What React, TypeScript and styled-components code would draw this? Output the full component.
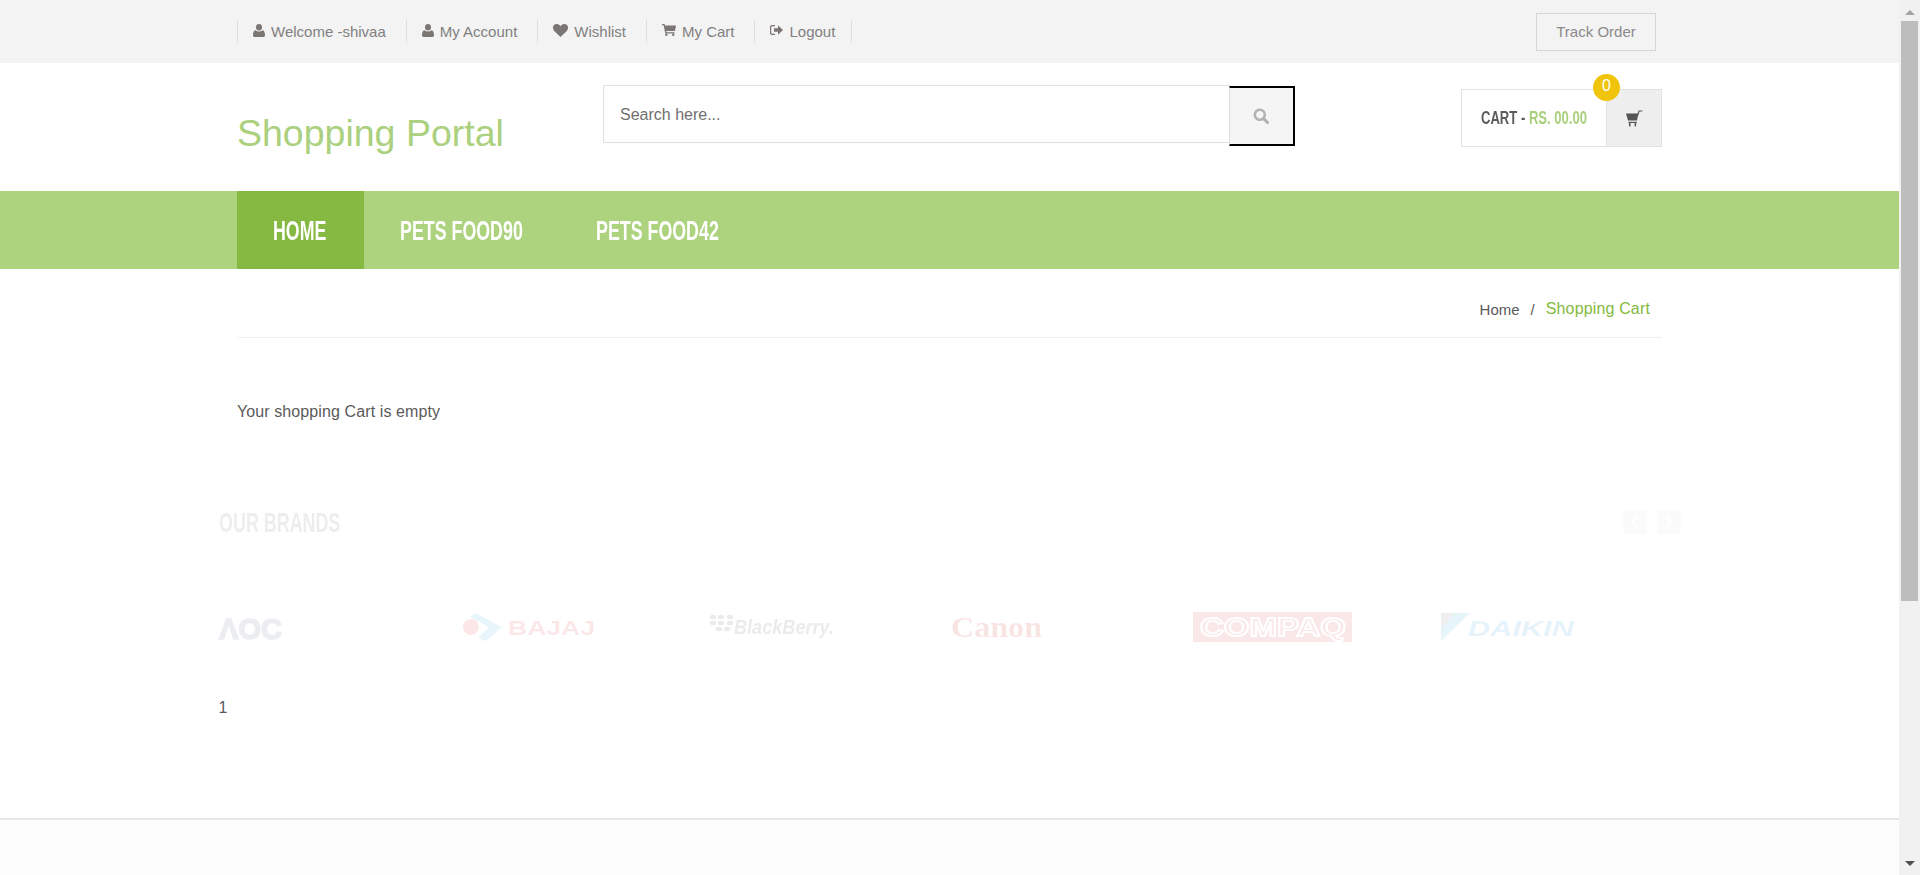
import React from 'react';
import styled, { createGlobalStyle } from 'styled-components';

const GlobalStyle = createGlobalStyle`
    html, body {
        margin: 0;
        padding: 0;
        overflow: hidden;
        background: #fff;
        font-family: "Liberation Sans", Arial, sans-serif;
    }
    * {
        box-sizing: border-box;
    }
`;

const Shell = styled.div`
    display: flex;
    width: 1920px;
    height: 875px;
    overflow: hidden;
`;

const Page = styled.div`
    display: flex;
    flex-direction: column;
    flex: 1;
    min-width: 0;
`;

const Container = styled.div`
    width: 1425px;
    margin: 0 auto;
`;

const TopBar = styled.div`
    height: 63px;
    background: #f3f3f3;
`;

const TopBarInner = styled(Container)`
    display: flex;
    justify-content: space-between;
    align-items: flex-start;
    padding-right: 6px;
`;

const TopLinks = styled.ul`
    display: flex;
    list-style: none;
    margin: 20px 0 0;
    padding: 0;
`;

const TopLink = styled.li`
    display: flex;
    align-items: center;
    gap: 6px;
    height: 23px;
    padding: 0 20px 0 15px;
    border-left: 1px solid #dedede;
    color: #808080;
    font-size: 15px;
    line-height: 23px;

    &:last-child {
        padding-right: 16px;
        border-right: 1px solid #dedede;
    }

    svg {
        margin-top: -3px;
        fill: #7b7674;
        flex-shrink: 0;
    }
`;

const TrackOrder = styled.a`
    display: flex;
    align-items: center;
    justify-content: center;
    width: 120px;
    height: 38px;
    margin-top: 13px;
    padding-bottom: 2px;
    border: 1px solid #d4d4d4;
    color: #8a8a8a;
    font-size: 15px;
`;

const Header = styled(Container)`
    display: flex;
    align-items: flex-start;
    height: 128px;
`;

const Logo = styled.h1`
    width: 366px;
    margin: 49px 0 0;
    color: #abd07e;
    font-size: 37.5px;
    font-weight: 400;
    line-height: 42px;
`;

const SearchForm = styled.form`
    display: flex;
    align-items: flex-start;
    margin-top: 22px;
`;

const SearchInput = styled.input`
    width: 626px;
    height: 58px;
    padding: 2px 16px 0;
    border: 1px solid #e0e0e0;
    border-right: 0;
    outline: none;
    font-family: inherit;
    font-size: 16px;
    color: #707070;

    &::placeholder {
        color: #707070;
        opacity: 1;
    }
`;

const SearchButton = styled.button`
    display: flex;
    align-items: center;
    justify-content: center;
    width: 66px;
    height: 60px;
    margin-top: 1px;
    padding: 0 2px 0 0;
    background: #f5f5f5;
    border-style: solid;
    border-color: #000 #000 #000 #ddd;
    border-width: 2px 2px 2px 1px;
`;

const CartBox = styled.div`
    position: relative;
    display: flex;
    width: 201px;
    height: 58px;
    margin: 26px 0 0 auto;
    border: 1px solid #e2e2e2;
`;

const CartLabel = styled.div`
    display: flex;
    align-items: center;
    width: 144px;
    padding-left: 19px;
`;

const CartIconCell = styled.div`
    display: flex;
    align-items: center;
    justify-content: center;
    flex: 1;
    background: #eee;
    border-left: 1px solid #e2e2e2;
`;

const CartBadge = styled.span`
    position: absolute;
    top: -16px;
    left: 131px;
    display: flex;
    align-items: center;
    justify-content: center;
    width: 27px;
    height: 27px;
    padding-bottom: 3px;
    border-radius: 50%;
    background: #f0c40a;
    color: #fff;
    font-size: 16px;
`;

// The original heading face is a condensed one; squeeze a bold sans to the same width.
const Condensed = styled.span<{ $width: number; $scale: number; $size: number }>`
    display: inline-block;
    width: ${(p) => p.$width}px;
    font-size: ${(p) => p.$size}px;
    font-weight: 700;
    white-space: nowrap;
    transform: scaleX(${(p) => p.$scale});
    transform-origin: left center;
`;

const CartTotal = styled.span`
    color: #a9d07d;
`;

const CartWord = styled.span`
    color: #5c5c5c;
`;

const NavBar = styled.nav`
    height: 78px;
    background: #add37f;
`;

const NavList = styled(Container)`
    display: flex;
    height: 100%;
`;

const NavItem = styled.a<{ $active?: boolean }>`
    display: flex;
    align-items: center;
    height: 100%;
    padding: 2px 36px 0;
    background: ${(p) => (p.$active ? '#85b941' : 'transparent')};
    color: #fff;
`;

const Breadcrumb = styled(Container)`
    display: flex;
    justify-content: flex-end;
    align-items: center;
    height: 69px;
    padding: 12px 12px 0 0;
    border-bottom: 1px solid #f0f0f0;
    font-size: 15px;
    color: #5a5a5a;
`;

const CrumbSep = styled.span`
    margin: 0 11px;
`;

const CrumbCurrent = styled.span`
    color: #85b941;
    font-size: 16px;
    letter-spacing: 0.15px;
`;

const EmptyMessage = styled(Container)`
    margin-top: 64px;
    color: #5a5a5a;
    font-size: 16px;
    letter-spacing: 0.1px;
    line-height: 20px;
`;

const BrandsSection = styled.section`
    width: 1462px;
    margin: 88px auto 0;
`;

const FadedBlock = styled.div`
    opacity: 0.1;
`;

const BrandsHead = styled.div`
    display: flex;
    justify-content: space-between;
    align-items: center;
    height: 24px;
    color: #555;
`;

const BrandsTitle = styled.span`
    display: inline-block;
    padding-top: 2px;
`;

const Arrows = styled.div`
    display: flex;
    gap: 10px;
    opacity: 0.5;
`;

const ArrowButton = styled.span`
    display: flex;
    align-items: center;
    justify-content: center;
    width: 24px;
    height: 24px;
    border-radius: 2px;
    background: #bbb;
    color: #fff;
`;

const BrandRow = styled.div`
    display: grid;
    grid-template-columns: repeat(6, 244px);
    height: 30px;
    margin-top: 78px;
    filter: blur(0.6px);

    svg {
        display: block;
        overflow: visible;
    }
`;

const PageCount = styled.div`
    margin-top: 56px;
    color: #5a5a5a;
    font-size: 16px;
    line-height: 20px;
`;

const Footer = styled.footer`
    flex: 1;
    margin-top: 100px;
    background: #fdfdfd;
    border-top: 2px solid #e8e8e8;
`;

const ScrollTrack = styled.div`
    display: flex;
    flex-direction: column;
    align-items: center;
    width: 21px;
    height: 100%;
    padding-top: 10px;
    background: #f1f1f1;
`;

const ScrollThumb = styled.div`
    width: 17px;
    height: 580px;
    margin-top: 6px;
    background: #bdbdbd;
`;

const ScrollArrow = styled.span<{ $down?: boolean }>`
    width: 0;
    height: 0;
    border-left: 5px solid transparent;
    border-right: 5px solid transparent;
    ${(p) =>
        p.$down
            ? `border-top: 5px solid #505050; margin-top: auto; margin-bottom: 9px;`
            : `border-bottom: 5px solid #a3a3a3;`}
`;

const UserIcon = () => (
    <svg width="12" height="13" viewBox="0 0 12 13">
        <ellipse cx="6" cy="3.2" rx="3" ry="3.2" />
        <path d="M0 11.2C0 8.6.6 6.6 2.5 6.2 3.4 7 4.6 7.4 6 7.4s2.6-.4 3.5-1.2c1.9.4 2.5 2.4 2.5 5 0 1.1-.7 1.8-1.8 1.8H1.8C.7 13 0 12.3 0 11.2z" />
    </svg>
);

const HeartIcon = () => (
    <svg width="15" height="13" viewBox="0 0 15 13">
        <path d="M7.5 13L1.2 6.9C-.4 5.2-.4 2.6 1 1.1 2.5-.4 5 -.3 6.4 1.1l1.1 1.2 1.1-1.2C10-.3 12.5-.4 14 1.1c1.4 1.5 1.4 4.1-.2 5.8z" />
    </svg>
);

const SmallCartIcon = () => (
    <svg width="14" height="12" viewBox="0 0 14 12">
        <path d="M0 0h2.6l.4 1.5h11L13 7H4.2l.3 1.3H12.6v1.2H3.3L1.6 1.2H0z" />
        <circle cx="4.4" cy="10.8" r="1.2" />
        <circle cx="11.2" cy="10.8" r="1.2" />
    </svg>
);

const LogoutIcon = () => (
    <svg width="13" height="12" viewBox="0 0 13 12">
        <path d="M2 1h3v1.2H2.4c-.7 0-1.2.5-1.2 1.2v5.2c0 .7.5 1.2 1.2 1.2H5V11H2c-1.2 0-2-.8-2-2V3c0-1.2.8-2 2-2z" />
        <path d="M13 6L8 1.2v3H4v3.6h4v3z" />
    </svg>
);

const SearchIcon = () => (
    <svg width="16" height="16" viewBox="0 0 16 16" fill="none" stroke="#b3b3b3">
        <circle cx="6.8" cy="6.8" r="5" strokeWidth="2.6" />
        <path d="M10.4 10.4L14.6 14.6" strokeWidth="3" strokeLinecap="round" />
    </svg>
);

const BasketIcon = () => (
    <svg width="17" height="17" viewBox="0 0 17 17" fill="#555">
        <path d="M0 3.5h12.4L11 10.6H2z" />
        <path d="M11.4 6L13 1h3.4" fill="none" stroke="#555" strokeWidth="1.2" />
        <rect x="2.4" y="11.8" width="8.4" height="1.2" />
        <rect x="3" y="13" width="1.5" height="3.4" />
        <rect x="8.6" y="13" width="1.5" height="3.4" />
    </svg>
);

const Chevron = ({ left }: { left?: boolean }) => (
    <svg width="7" height="12" viewBox="0 0 7 12" fill="none" stroke="#fff" strokeWidth="2">
        <path d={left ? 'M6 1L1 6l5 5' : 'M1 1l5 5-5 5'} />
    </svg>
);

const AocLogo = () => (
    <svg width="244" height="30" viewBox="0 0 244 30">
        <text x="0" y="27" fontFamily="Liberation Sans" fontWeight="700" fontSize="30" fill="#4a5a78" stroke="#4a5a78" strokeWidth="1.6" textLength="63" lengthAdjust="spacingAndGlyphs">
            ΛOC
        </text>
    </svg>
);

const BajajLogo = () => (
    <svg width="244" height="30" viewBox="0 0 244 30">
        <circle cx="8" cy="15" r="8" fill="#e8202a" />
        <path d="M12 1l27 14-16 14-8-3 11-11L7 5z" fill="#29abe2" />
        <text x="45" y="23" fontFamily="Liberation Sans" fontWeight="700" fontSize="21" fill="#e8202a" textLength="87" lengthAdjust="spacingAndGlyphs">
            BAJAJ
        </text>
    </svg>
);

const BlackBerryLogo = () => {
    const dots = [
        [0, 3], [8, 3], [17, 3],
        [0, 9], [8, 9], [17, 9],
        [6, 15], [14, 15],
    ];
    return (
        <svg width="244" height="30" viewBox="-3 0 244 30">
            {dots.map(([x, y], i) => (
                <ellipse key={i} cx={x + 3} cy={y + 2} rx="3.2" ry="2.2" fill="#444" />
            ))}
            <text x="24" y="22" fontFamily="Liberation Sans" fontWeight="700" fontStyle="italic" fontSize="20" fill="#444" textLength="100" lengthAdjust="spacingAndGlyphs">
                BlackBerry.
            </text>
        </svg>
    );
};

const CanonLogo = () => (
    <svg width="244" height="30" viewBox="0 0 244 30">
        <text x="0" y="25" fontFamily="Liberation Serif" fontWeight="700" fontSize="29" fill="#cc0000" textLength="91" lengthAdjust="spacingAndGlyphs">
            Canon
        </text>
    </svg>
);

const CompaqLogo = () => (
    <svg width="244" height="30" viewBox="2 0 244 30">
        <rect x="0" y="0" width="159" height="30" fill="#d9202a" />
        <text x="7" y="24" fontFamily="Liberation Sans" fontWeight="700" fontSize="25" fill="#d9202a" stroke="#fff" strokeWidth="1.8" textLength="146" lengthAdjust="spacingAndGlyphs">
            COMPAQ
        </text>
    </svg>
);

const DaikinLogo = () => (
    <svg width="244" height="30" viewBox="-2 0 244 30">
        <path d="M0 1h29L0 29z" fill="#1ca3dd" />
        <path d="M0 1h14L0 16z" fill="#666" />
        <text x="27" y="24" fontFamily="Liberation Sans" fontWeight="700" fontStyle="italic" fontSize="22" fill="#1b8fd0" textLength="106" lengthAdjust="spacingAndGlyphs">
            DAIKIN
        </text>
    </svg>
);

const topLinks = [
    { label: 'Welcome -shivaa', icon: <UserIcon /> },
    { label: 'My Account', icon: <UserIcon /> },
    { label: 'Wishlist', icon: <HeartIcon /> },
    { label: 'My Cart', icon: <SmallCartIcon /> },
    { label: 'Logout', icon: <LogoutIcon /> },
];

const navItems = [
    { label: 'HOME', width: 55, active: true },
    { label: 'PETS FOOD90', width: 124 },
    { label: 'PETS FOOD42', width: 124 },
];

const App: React.FC = () => {
    return (
        <Shell>
            <GlobalStyle />
            <Page>
                <TopBar>
                    <TopBarInner>
                        <TopLinks>
                            {topLinks.map((link) => (
                                <TopLink key={link.label}>
                                    {link.icon}
                                    {link.label}
                                </TopLink>
                            ))}
                        </TopLinks>
                        <TrackOrder>Track Order</TrackOrder>
                    </TopBarInner>
                </TopBar>

                <Header>
                    <Logo>Shopping Portal</Logo>
                    <SearchForm>
                        <SearchInput placeholder="Search here..." />
                        <SearchButton type="button">
                            <SearchIcon />
                        </SearchButton>
                    </SearchForm>
                    <CartBox>
                        <CartLabel>
                            <Condensed $width={106} $scale={0.726} $size={18}>
                                <CartWord>CART - </CartWord>
                                <CartTotal>RS. 00.00</CartTotal>
                            </Condensed>
                        </CartLabel>
                        <CartIconCell>
                            <BasketIcon />
                        </CartIconCell>
                        <CartBadge>0</CartBadge>
                    </CartBox>
                </Header>

                <NavBar>
                    <NavList>
                        {navItems.map((item) => (
                            <NavItem key={item.label} $active={item.active}>
                                <Condensed $width={item.width} $scale={0.66} $size={27}>
                                    {item.label}
                                </Condensed>
                            </NavItem>
                        ))}
                    </NavList>
                </NavBar>

                <Breadcrumb>
                    Home
                    <CrumbSep>/</CrumbSep>
                    <CrumbCurrent>Shopping Cart</CrumbCurrent>
                </Breadcrumb>

                <EmptyMessage>Your shopping Cart is empty</EmptyMessage>

                <BrandsSection>
                    <FadedBlock>
                        <BrandsHead>
                            <BrandsTitle>
                                <Condensed $width={118} $scale={0.64} $size={28}>
                                    OUR BRANDS
                                </Condensed>
                            </BrandsTitle>
                            <Arrows>
                                <ArrowButton>
                                    <Chevron left />
                                </ArrowButton>
                                <ArrowButton>
                                    <Chevron />
                                </ArrowButton>
                            </Arrows>
                        </BrandsHead>
                        <BrandRow>
                            <AocLogo />
                            <BajajLogo />
                            <BlackBerryLogo />
                            <CanonLogo />
                            <CompaqLogo />
                            <DaikinLogo />
                        </BrandRow>
                    </FadedBlock>
                    <PageCount>1</PageCount>
                </BrandsSection>

                <Footer />
            </Page>
            <ScrollTrack>
                <ScrollArrow />
                <ScrollThumb />
                <ScrollArrow $down />
            </ScrollTrack>
        </Shell>
    );
};

export default App;
